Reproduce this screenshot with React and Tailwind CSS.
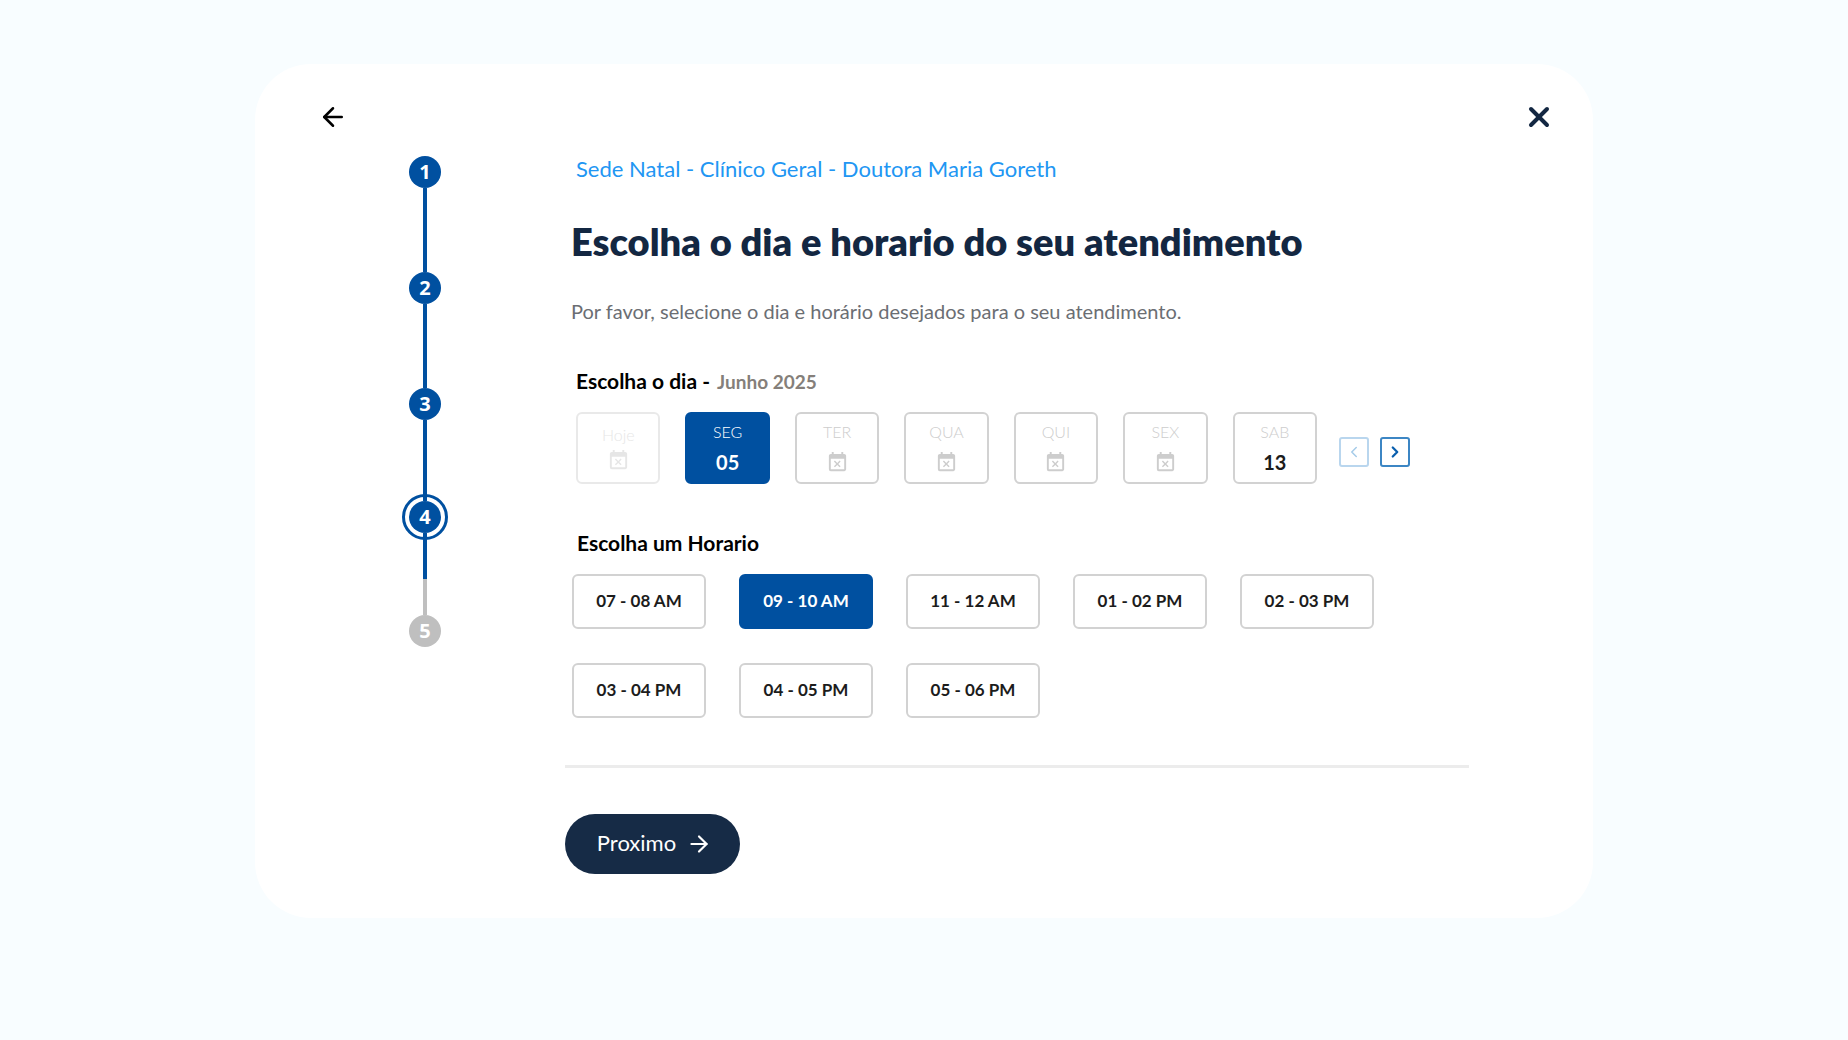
import { useState } from 'react'
import { ArrowLeft, ArrowRight, ChevronLeft, ChevronRight, X } from 'lucide-react'
import { MdEventBusy } from 'react-icons/md'

const days = [
  { label: 'Hoje', past: true },
  { label: 'SEG', date: '05' },
  { label: 'TER' },
  { label: 'QUA' },
  { label: 'QUI' },
  { label: 'SEX' },
  { label: 'SAB', date: '13' },
]

const slots = ['07 - 08 AM', '09 - 10 AM', '11 - 12 AM', '01 - 02 PM', '02 - 03 PM', '03 - 04 PM', '04 - 05 PM', '05 - 06 PM']

function StepCircle({ number, current, pending }) {
  const color = pending ? 'bg-[#bfbfbf]' : 'bg-[#0050a0]'
  const ring = current ? 'outline-[3px] outline-offset-4 outline-[#0050a0]' : ''

  return (
    <li
      aria-current={current ? 'step' : undefined}
      className={`flex size-8 items-center justify-center rounded-full font-['Open_Sans',sans-serif] text-xl font-bold text-white ${color} ${ring}`}
    >
      {number}
    </li>
  )
}

function Stepper() {
  return (
    <ol className="flex w-8 shrink-0 flex-col items-center">
      <StepCircle number={1} />
      <li aria-hidden="true" className="h-[84px] w-1 bg-[#0050a0]" />
      <StepCircle number={2} />
      <li aria-hidden="true" className="h-[84px] w-1 bg-[#0050a0]" />
      <StepCircle number={3} />
      <li aria-hidden="true" className="h-[81px] w-1 bg-[#0050a0]" />
      <StepCircle number={4} current />
      <li aria-hidden="true" className="h-[46px] w-1 bg-[#0050a0]" />
      <li aria-hidden="true" className="h-9 w-1 bg-[#bfbfbf]" />
      <StepCircle number={5} pending />
    </ol>
  )
}

function DayCard({ day, selected, onSelect }) {
  let styles = 'border-[#d2d2d2] text-[#cdcdcd]'
  if (day.past) styles = 'border-[#e9e9e9] text-[#e6e6e6]'
  if (selected) styles = 'border-[#0050a0] bg-[#0050a0] text-white'

  return (
    <button
      type="button"
      disabled={!day.date}
      aria-pressed={selected}
      onClick={onSelect}
      className={`flex h-[72px] flex-col items-center rounded-md border-2 ${day.past ? 'pt-[11px]' : 'pt-2'} ${styles}`}
    >
      <span className="text-base leading-5 font-light">{day.label}</span>
      {day.date ? (
        <span className={`mt-2 text-xl leading-6 font-bold ${selected ? 'text-white' : 'text-[#1c1c1c]'}`}>{day.date}</span>
      ) : (
        <MdEventBusy size={23} className={day.past ? 'mt-1' : 'mt-[9px]'} />
      )}
    </button>
  )
}

export default function App() {
  const [day, setDay] = useState('SEG')
  const [slot, setSlot] = useState('09 - 10 AM')

  return (
    <div className="min-h-screen bg-[#f8fdff] px-6 py-16 font-['Lato',sans-serif]">
      <main className="mx-auto max-w-[1338px] rounded-[56px] bg-white pb-11">
        <header className="flex items-center justify-between pt-[37px] pr-[38px] pl-[62px]">
          <button type="button" aria-label="Voltar" className="flex size-8 items-center justify-center text-black">
            <ArrowLeft size={30} />
          </button>
          <button type="button" aria-label="Fechar" className="flex size-8 items-center justify-center text-[#132742]">
            <X size={32} strokeWidth={3} />
          </button>
        </header>

        <div className="mt-[23px] flex gap-[124px] pr-[124px] pl-[154px]">
          <Stepper />

          <div className="min-w-0 flex-1">
            <p className="pl-[11px] text-[22px] leading-[26px] text-[#2196f3]">Sede Natal - Clínico Geral - Doutora Maria Goreth</p>
            <h1 className="mt-[39px] pl-[6px] text-[38px] leading-10 font-extrabold text-[#132742]">Escolha o dia e horario do seu atendimento</h1>
            <p className="mt-[38px] pl-[6px] text-[20px] leading-6 text-[#6b6e73]">
              Por favor, selecione o dia e horário desejados para o seu atendimento.
            </p>

            <h2 className="mt-[46px] pl-[11px] text-[21px] leading-6 font-bold text-black">
              Escolha o dia - <span className="ml-[2px] text-[19px] text-[#857f7a]">Junho 2025</span>
            </h2>
            <div className="mt-[18px] flex items-center pl-[11px]">
              <div className="grid w-[741px] grid-cols-7 gap-[25px]">
                {days.map((item) => (
                  <DayCard key={item.label} day={item} selected={item.label === day} onSelect={() => setDay(item.label)} />
                ))}
              </div>
              <div className="ml-[22px] flex gap-[11px] pt-2">
                <button type="button" disabled aria-label="Semana anterior" className="flex size-[30px] items-center justify-center rounded-[3px] border-2 border-[#b9d6ee] text-[#a5cbe9]">
                  <ChevronLeft size={18} />
                </button>
                <button type="button" aria-label="Próxima semana" className="flex size-[30px] items-center justify-center rounded-[3px] border-2 border-[#3c86c4] text-[#0a5fae]">
                  <ChevronRight size={18} strokeWidth={3} />
                </button>
              </div>
            </div>

            <h2 className="mt-[47px] pl-3 text-[21px] leading-6 font-bold text-black">Escolha um Horario</h2>
            <div className="mt-[19px] ml-[7px] grid w-[802px] grid-cols-5 gap-x-[33px] gap-y-[34px]">
              {slots.map((item) => (
                <button
                  key={item}
                  type="button"
                  aria-pressed={item === slot}
                  onClick={() => setSlot(item)}
                  className={`h-[55px] rounded-md border-2 pb-[2px] text-[17px] font-bold ${item === slot ? 'border-[#0050a0] bg-[#0050a0] text-white' : 'border-[#d2d2d2] text-[#1c1c1c]'}`}
                >
                  {item}
                </button>
              ))}
            </div>

            <hr className="mt-[47px] border-t-3 border-[#ececec]" />

            <button type="button" className="mt-[46px] flex h-[60px] w-[175px] items-center justify-center gap-[10px] rounded-full bg-[#162b46] pl-1 text-[22px] leading-7 text-white">
              <span className="pb-[2px]">Proximo</span>
              <ArrowRight size={26} />
            </button>
          </div>
        </div>
      </main>
    </div>
  )
}
